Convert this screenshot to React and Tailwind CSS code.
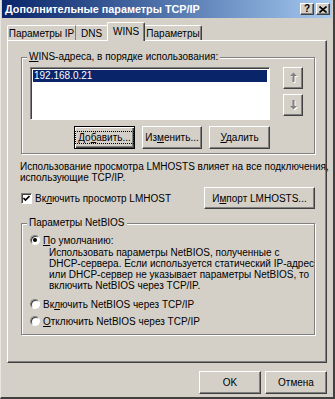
import React from "react";

const raised =
  "border border-t-white border-l-white border-r-[#404040] border-b-[#404040] shadow-[inset_-1px_-1px_0_#808080]";
const sunken =
  "border border-t-[#808080] border-l-[#808080] border-r-white border-b-white shadow-[inset_1px_1px_0_#404040]";
const etched =
  "border border-[#808080] shadow-[1px_1px_0_#fff,inset_1px_1px_0_#fff]";

function U({ children }) {
  return <span className="underline underline-offset-[1px]">{children}</span>;
}

function Btn({ className = "", children, def }) {
  return (
    <div
      className={`flex items-center justify-center bg-[#d4d0c8] ${
        def
          ? "border border-black shadow-[inset_1px_1px_0_#fff,inset_-1px_-1px_0_#404040,inset_-2px_-2px_0_#808080]"
          : raised
      } ${className}`}
    >
      {def ? (
        <span className="px-[2px] outline outline-1 outline-dotted outline-black leading-[11px]">
          {children}
        </span>
      ) : (
        children
      )}
    </div>
  );
}

function Arrow({ down }) {
  const p = down
    ? "M4 1h2v6h2.5L5 10.5 1.5 7H4z"
    : "M4 10h2V4h2.5L5 0.5 1.5 4H4z";
  return (
    <svg width="11" height="12" viewBox="0 0 11 12">
      <path d={p} transform="translate(1.5 1)" fill="#fff" />
      <path d={p} transform="translate(0.5 0)" fill="#808080" />
    </svg>
  );
}

function Radio({ checked }) {
  return (
    <div className="w-[10px] h-[10px] rounded-full bg-white border border-t-[#808080] border-l-[#808080] border-r-white border-b-white shadow-[inset_1px_1px_0_#404040] flex items-center justify-center shrink-0">
      {checked && <div className="w-[4px] h-[4px] rounded-full bg-black" />}
    </div>
  );
}

function Group({ legend, className = "", children }) {
  return (
    <div className={`relative ${etched} ${className}`}>
      <span className="absolute left-[5px] -top-[7px] bg-[#d4d0c8] px-[2px] leading-[12px]">
        {legend}
      </span>
      {children}
    </div>
  );
}

export default function App() {
  return (
    <div className="w-[335px] h-[399px] bg-[#d4d0c8] flex flex-col text-[10px] text-black whitespace-nowrap font-['Liberation_Sans',Arial,sans-serif] border-l border-l-[#e8e6e0] border-r-2 border-r-[#404040] border-b-2 border-b-[#404040] pl-px pr-px overflow-hidden">
      {/* title bar */}
      <div className="h-[18px] bg-linear-to-r from-[#0a246a] to-[#a6caf0] flex items-center pl-[3px] pr-[2px]">
        <span className="text-white font-bold text-[10.8px] leading-none flex-1">
          Дополнительные параметры TCP/IP
        </span>
        <div className={`w-[14px] h-[12px] bg-[#d4d0c8] ${raised} flex items-center justify-center font-bold text-[10px] leading-none`}>
          ?
        </div>
        <div className={`ml-[2px] w-[14px] h-[12px] bg-[#d4d0c8] ${raised} flex items-center justify-center`}>
          <svg width="8" height="7" viewBox="0 0 8 7">
            <path d="M0.5 0.5L7.5 6.5M7.5 0.5L0.5 6.5" stroke="#000" strokeWidth="1.6" />
          </svg>
        </div>
      </div>

      {/* tabs */}
      <div className="mt-[4px] ml-[5px] flex items-end h-[18px] relative z-10">
        <div className="w-[69px] h-[15px] flex items-center justify-center border-t border-l border-white border-r border-r-[#808080] rounded-tl-[2px]">
          Параметры IP
        </div>
        <div className="w-[32px] h-[15px] flex items-center justify-center border-t border-t-white border-r border-r-[#808080]">
          DNS
        </div>
        <div className="w-[38px] h-[19px] -mb-px -ml-px flex items-center justify-center bg-[#d4d0c8] border-t border-l border-white border-r border-r-[#404040] shadow-[inset_-1px_0_0_#808080] rounded-t-[2px] pb-[2px]">
          WINS
        </div>
        <div className="w-[57px] h-[15px] flex items-center justify-center border-t border-t-white border-r border-r-[#404040] shadow-[inset_-1px_0_0_#808080] rounded-tr-[2px]">
          Параметры
        </div>
      </div>

      {/* panel */}
      <div className="ml-[5px] w-[320px] h-[323px] border border-t-white border-l-white border-r-[#404040] border-b-[#404040] shadow-[inset_-1px_-1px_0_#808080] flex flex-col">
        <Group
          legend={
            <>
              <U>W</U>INS-адреса, в порядке использования:
            </>
          }
          className="mt-[16px] ml-[13px] w-[294px] h-[97px]"
        >
          <div className="pt-[9px] pl-[8px] flex">
            <div className={`w-[240px] h-[53px] bg-white ${sunken} p-[2px]`}>
              <div className="h-[12px] bg-[#0a246a] text-white flex items-center pl-[1px] leading-none">
                192.168.0.21
              </div>
            </div>
            <div className="ml-[13px] flex flex-col gap-[5px]">
              <div className={`w-[20px] h-[22px] ${raised} flex items-center justify-center`}>
                <Arrow />
              </div>
              <div className={`w-[20px] h-[22px] ${raised} flex items-center justify-center`}>
                <Arrow down />
              </div>
            </div>
          </div>
          <div className="pl-[8px] mt-[6px] w-[248px] flex justify-end gap-[7px]">
            <Btn def className="w-[61px] h-[23px]">
              До<U>б</U>авить...
            </Btn>
            <Btn className="w-[60px] h-[23px]">
              <span>
                Из<U>м</U>енить...
              </span>
            </Btn>
            <Btn className="w-[61px] h-[23px]">
              <span>
                <U>У</U>далить
              </span>
            </Btn>
          </div>
        </Group>

        <div className="mt-[7px] ml-[12px] leading-[11px]">
          Использование просмотра LMHOSTS влияет на все подключения,
          <br />
          использующие TCP/IP.
        </div>

        <div className="mt-[4px] ml-[13px] flex items-center h-[22px]">
          <div className={`w-[11px] h-[11px] bg-white ${sunken} flex items-center justify-center`}>
            <svg width="7" height="7" viewBox="0 0 7 7">
              <path d="M0.5 3L2.5 5L6.5 1" stroke="#000" strokeWidth="1.6" fill="none" />
            </svg>
          </div>
          <span className="ml-[2px] pl-[1px]">
            Вк<U>л</U>ючить просмотр LMHOST
          </span>
          <Btn className="ml-auto mr-[11px] w-[111px] h-[22px]">
            <span>
              И<U>м</U>порт LMHOSTS...
            </span>
          </Btn>
        </div>

        <Group legend="Параметры NetBIOS" className="mt-[14px] ml-[13px] w-[294px] h-[112px]">
          <div className="pt-[10px] pl-[8px] flex flex-col">
            <div className="flex items-center h-[12px]">
              <Radio checked />
              <span className="ml-[3px]">
                <U>П</U>о умолчанию:
              </span>
            </div>
            <div className="ml-[19px] mt-[1px] leading-[11px]">
              Использовать параметры NetBIOS, полученные с
              <br />
              DHCP-сервера. Если используется статический IP-адрес
              <br />
              или DHCP-сервер не указывает параметры NetBIOS, то
              <br />
              включить NetBIOS через TCP/IP.
            </div>
            <div className="flex items-center h-[12px] mt-[7px]">
              <Radio />
              <span className="ml-[3px]">
                Вк<U>л</U>ючить NetBIOS через TCP/IP
              </span>
            </div>
            <div className="flex items-center h-[12px] mt-[5px]">
              <Radio />
              <span className="ml-[3px]">
                <U>О</U>тключить NetBIOS через TCP/IP
              </span>
            </div>
          </div>
        </Group>
      </div>

      {/* bottom buttons */}
      <div className="mt-[8px] ml-[5px] w-[320px] flex justify-end gap-[4px]">
        <Btn className="w-[62px] h-[23px]">OK</Btn>
        <Btn className="w-[62px] h-[23px]">Отмена</Btn>
      </div>
    </div>
  );
}
